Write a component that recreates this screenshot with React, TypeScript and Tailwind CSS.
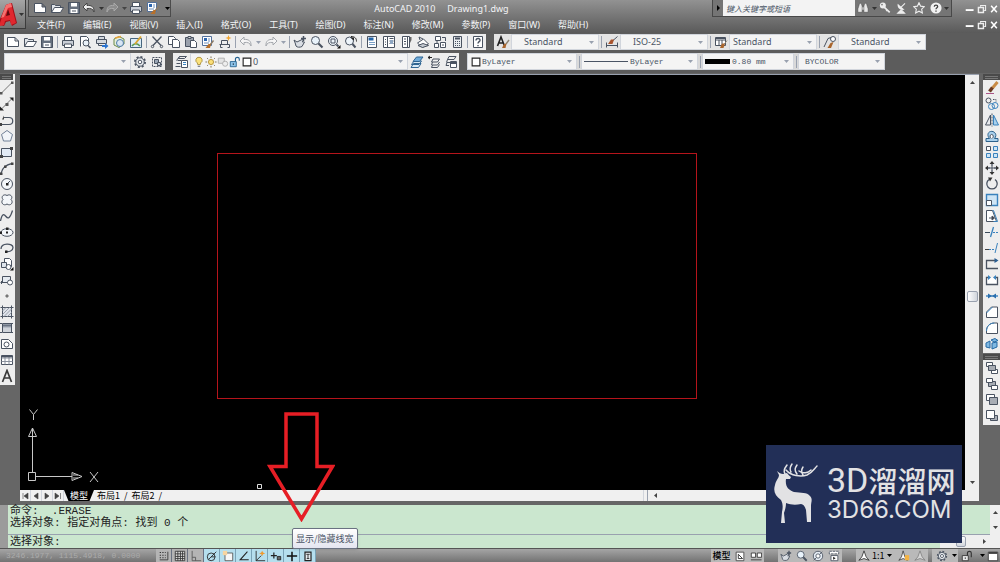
import type { ReactNode } from 'react'

type IconName = keyof typeof icons

const ink = '#4a5361'
const blue = '#3a82bd'

const icons = {
  newFile: <path d="M1.500 2.500h7.500l3.500 3.500v5.500h-11zM9 2.500v3.500h3.500" fill="#fff" />,
  open: <><path d="M1.500 11.500v-8h3l1 1h5v2" fill="#dfe3e8" /><path d="M1.500 11.500l3-5h9l-3 5z" fill="#fff" /></>,
  save: <><path d="M1.500 1.500h11v11h-11z" fill="#66707e" /><path d="M4 2h6v3.500H4zM3.500 8h7v4h-7z" fill="#fff" stroke="none" /><path d="M5 10h4" /></>,
  undo: <path d="M5 2L1 6l4 4V7.500c4-.5 6 .5 7 3.500.500-5-2.500-7-7-6.500z" />,
  redo: <path d="M9 2l4 4-4 4V7.500c-4-.5-6 .5-7 3.500C1.500 6 4.500 4 9 4.500z" />,
  print: <><path d="M3.500 5V1.500h7V5" fill="#fff" /><path d="M1.500 5.500h11v5h-11z" fill="#c9ced6" /><path d="M3.500 9h7v3.500h-7z" fill="#fff" /></>,
  preview: <><path d="M2.500 11.500v-10h6l2 2v3" fill="#fff" /><circle cx="8" cy="8" r="3" fill="#e8f0f8" /><path d="M10 10.500l2.500 2.500" strokeWidth="1.600" /></>,
  publish: <><path d="M3.500 4V1.500h6V4M1.500 4.500h10v4h-10z" fill="#d5d9df" /><path d="M3.500 8v2.500h4" /><path d="M7 10h3V8l3.500 3-3.500 3v-2H7z" fill="#2b74d0" stroke="none" /></>,
  dwf: <><path d="M2 4l5-2.500L12 4v5l-5 3.500L2 10z" fill="#e6efda" stroke="#6b8a4a" /><circle cx="8" cy="8" r="3.500" fill="#d9e6f4" stroke="#4f7ca8" /><path d="M3 3l6-1.500" stroke="#e6a23a" strokeWidth="1.600" /></>,
  markup: <><path d="M1.500 3.500h11v9h-11z" fill="#dcecf8" stroke="#47657f" /><path d="M3 11c2-3 5-3 8 0" stroke="#5b9a52" strokeWidth="1.600" /><path d="M6 9l6-7.500" stroke="#d9a531" strokeWidth="2" /></>,
  cut: <><path d="M2.500 1.500l8.500 9M11.500 1.500L3 10.500" strokeWidth="1.300" /><circle cx="2.500" cy="11.500" r="1.200" /><circle cx="11.500" cy="11.500" r="1.200" /></>,
  copy: <><path d="M1.500 1.500h5l2 2v6h-7z" fill="#fff" /><path d="M5.500 4.500h5l2 2v6h-7z" fill="#fff" /></>,
  paste: <><path d="M1.500 2.500h8v9h-8z" fill="#9aa1ac" /><path d="M4 1.500h3v2H4z" fill="#ddd" /><path d="M6.500 5.500h4l2 2v5h-6z" fill="#fff" /></>,
  match: <><path d="M1.500 1.500h9v9h-9z" fill="#fff" stroke="#52709b" /><path d="M3 3h3v3H3z" fill="#2c66b0" stroke="none" /><path d="M7 4h2M7 6h2M3 8h5" stroke="#6f8fba" /><path d="M12.500 5.500L9 10" stroke="#8b7b68" strokeWidth="1.500" /><path d="M10 9l-1 4H4.500l3-4z" fill="#b6702b" stroke="none" /></>,
  block: <><path d="M1.500 9.500h10M3.500 9V5.500h6V9M2.500 9.500v3h2M9.500 12.500h2v-3" /><path d="M10.500 0l.8 2.200L13.500 3l-2.200.8-.8 2.200-.8-2.200L7.500 3l2.200-.8z" fill="#f2a52c" stroke="none" /></>,
  pan: <><path d="M1 5l3 2 5-2.500c2-.5 1.500 1.500 0 2.200L11.500 7 9 11.500c-2 1-5 1-6-.5C2.500 9 2 7 1 5z" fill="#d9dde3" /><path d="M10.500 1v5M8 3.500h5" strokeWidth="1.500" /></>,
  zoom: <><circle cx="5.500" cy="5.500" r="4" fill="#e9f3fb" /><path d="M8.500 8.500l4 4" strokeWidth="2.200" /></>,
  zoomWindow: <><circle cx="6" cy="6" r="4.500" fill="#eef5fb" /><path d="M4 4h4v4H4z" /><path d="M9.500 9.500l2 2" strokeWidth="2" /><path d="M13.500 10v3.500H10z" fill="#111" stroke="none" /></>,
  zoomPrev: <><circle cx="5.500" cy="6" r="4" fill="#eef5fb" /><path d="M8.500 9l3 3.500" strokeWidth="2" /><path d="M7 1.500c4 0 5.500 2 5.500 5" stroke="#222" /><path d="M6 2.500h4v3z" fill="#222" stroke="none" /></>,
  props: <><path d="M2.500 1.500h9v11h-9z" fill="#fff" /><path d="M3.500 2.500h5v3h-5z" fill="#2465a8" stroke="none" /><path d="M4 7.500h6M4 9.500h6" stroke="#7b9fc5" /></>,
  dcenter: <><path d="M1.500 1.500h11v11h-11z" fill="#fff" /><path d="M5.500 2v10M7.500 3.500h4M7.500 6h4M7.500 8.500h4M3 4.500h1M3 7h1M3 9.500h1" /><path d="M8 5h3v4H8z" fill="#8ea6c2" stroke="none" /></>,
  palettes: <><path d="M3.500 1.500h7v11h-7z" fill="#fff" /><path d="M8.500 2v10M5 4h2M5 6.500h2M5 9h2" /><path d="M11 2h1.500v3L11 8z" fill="#666" stroke="none" /></>,
  sheets: <><path d="M1.500 8l6-4 5 5-6 3.500z" fill="#fff" /><path d="M2 10.500l5-2 5.500 2-6 2z" fill="#c4c9d0" /><path d="M4 5L3 2l4 2" /></>,
  markupSet: <><path d="M2.500 1.500h5v4h-5zM7.500 7.500h5v5h-5zM1.500 8.500h4v4h-4z" fill="#fff" /><path d="M9 2.500h3.500V6M4 6v2.500M9 10h2" /></>,
  calc: <><path d="M3.500 1.500h8v11h-8z" fill="#e9ecef" /><path d="M5 3.500h5" strokeWidth="2" /><path d="M5 6.500h5M5 8.500h5M5 10.500h5" strokeDasharray="1 1" /></>,
  help: <><path d="M2.500 1.500h9v11h-9z" fill="#fff" /><path d="M5 5.500c0-3 4.500-2.500 4 0-.3 1.200-2 1.200-2 3M7 10v1.200" strokeWidth="1.400" /></>,
  textStyle: <><path d="M1.500 11L5 2l3.500 9M3 8h4" stroke="#222" strokeWidth="1.600" /><path d="M13 5l-3 4" stroke="#8d8371" strokeWidth="1.400" /><path d="M10.500 8.500L9.500 13H6l2-4z" fill="#a9652c" stroke="none" /></>,
  dimStyle: <><path d="M1.500 7.500v5M12.500 7.500v5M2 10.500h10M12.500 1.500L8 5.500" /><path d="M9 4.500L7.500 9H3l3-4.500z" fill="#a9542c" stroke="none" /></>,
  tableStyle: <><path d="M1.500 2.500h10v8h-10z" fill="#fff" /><path d="M1.500 5h10M5 5v5.500M8 5v5.500M2 3.500h9" /><path d="M13 5.500l-3 4" stroke="#8d8371" /><path d="M11 8.500L9.500 13H6l2-4.500z" fill="#a9652c" stroke="none" /></>,
  leaderStyle: <><path d="M1 12l4-8.500 3-1" /><circle cx="10" cy="4" r="2.500" fill="#fff" /><path d="M10.500 7L8 13H4.500l3-5z" fill="#a9652c" stroke="none" /></>,
  gear: <><circle cx="7" cy="7" r="5" strokeWidth="2" strokeDasharray="2 1.900" /><circle cx="7" cy="7" r="4.200" fill="#eceff2" /><circle cx="7" cy="7" r="1.800" fill="#fff" /></>,
  wsSave: <><path d="M2.500 2.500h9v9h-9z" strokeDasharray="2 1" /><path d="M4.500 4.500h4v4h-4z" fill="#9aa6b5" /><path d="M7.500 7.500h3v3h-3z" fill="#c6ced8" /></>,
  layers: <><path d="M4.500 1.500h7l-2 2h-6zM2.500 5.500h4M1.500 8.500h4M.500 11.500h5M4.500 1.500l-3 4" /><path d="M6.500 5.500h6v7h-6z" fill="#fff" /><path d="M8 7.500h3M8 9.500h3" stroke={blue} /></>,
  bulb: <><path d="M7 1.500a3.500 3.500 0 012 6.500l-.5 2h-3L5 8a3.500 3.500 0 012-6.500z" fill="#fbe27c" stroke="#a58a35" /><path d="M5.500 12h3" /></>,
  sun: <><circle cx="7" cy="7" r="3" fill="#fbe07a" stroke="#b08b2c" /><path d="M7 .5v2M7 11.500v2M.5 7h2M11.500 7h2M2.500 2.500l1.200 1.200M10.300 10.300l1.200 1.200M2.500 11.500l1.200-1.200M10.300 3.700l1.200-1.200" stroke="#6d6244" /></>,
  freeze: <><path d="M1.500 2.500h7v6h-7z" fill="#e4e4e4" stroke="#aaa" /><circle cx="9.500" cy="9" r="3" stroke="#aaa" fill="#eee" /></>,
  unlock: <><path d="M1.500 6.500h7v6h-7z" fill="#8ec4ea" stroke="#24618f" /><path d="M7.500 6.500v-3c0-2.500 4.500-2.500 4.500 0v2" stroke="#24618f" strokeWidth="1.300" /><path d="M5 8.500v2" stroke="#123" /></>,
  lockUi: <><path d="M1.500 6.500h7v6h-7z" fill="#e8e8e8" stroke="#333" /><path d="M7.500 6.500v-3c0-2.500 4.500-2.500 4.500 0v5" stroke="#333" strokeWidth="1.300" /><path d="M5 8.500v2" stroke="#333" /></>,
  swatch: <path d="M2.500 2.500h9v9h-9z" fill="#fff" stroke="#222" strokeWidth="1.300" />,
  makeLayer: <><path d="M1 12.500l2.500-4H11l-2.500 4zM1.500 9.500L4 6h7.500L9 9.500z" fill="#d7e9f6" stroke="#2f6592" /><path d="M3 6.500l3.500-4.500H13L9.500 6.500z" fill="#6fabd9" stroke="#2f6592" /></>,
  layerPrev: <><path d="M4.500 7l1.500-3h6.500l-2 3zM4.500 10l1-3M4.500 12.500l1-2.500M5 10h5.500l2-3M4.500 12.500h6l2-3" /><path d="M1 2.500h4M1 2.500l2-1.500M1 2.500l2 1.500" stroke="#222" /></>,
  layerState: <><path d="M5 1.500h7l-2 3H3.500zM2.500 7.500l1-3M2 10.500l1-3h3M2 10.500h3" /><path d="M6.500 6.500h6v6h-6z" fill="#fff" /><path d="M7 8h5" strokeWidth="2" /></>,
  line: <><path d="M1 12.500L12 1.500" stroke="#777" /><path d="M0 11h2.500v2.500H0zM11 .5h2.500V3H11z" fill="#555" stroke="none" /></>,
  xline: <><path d="M1.500 12l10-10" stroke="#777" /><path d="M0 13.500v-4l4 4zM13.500.5v4l-4-4z" fill="#222" stroke="none" /><path d="M5.500 6h3v3h-3z" fill="#555" stroke="none" /></>,
  pline: <><path d="M0 11.500h9c5 0 5-7 0-7H4" strokeWidth="1.200" /><path d="M4 2.500v4H2zM0 10h2v3H0z" fill="#444" stroke="none" /></>,
  polygon: <path d="M7 1.500l5.500 4-2 6.500h-7l-2-6.500z" fill="#f2f5f9" stroke="#718096" />,
  rect: <><path d="M1.500 3.500h10v8h-10z" fill="#e3ebf5" /><path d="M0 10h3v3H0zM10 2h3v3h-3z" fill="#444" stroke="none" /></>,
  arc: <><path d="M1 12.500C2 7 5 4 12 2.500" strokeWidth="1.300" /><path d="M0 11.500h2.500V14H0zM4 4.500h2.500V7H4zM11 1.500h2.500V4H11z" fill="#444" stroke="none" /></>,
  circle: <><circle cx="7" cy="7" r="5.500" fill="#f4f7fa" /><path d="M7 7l3-3" /><path d="M6 6h2.500v2.500H6z" fill="#222" stroke="none" /></>,
  cloud: <path d="M7 2.500C4 .5.500 3.500 3 6.500c-3 3 .5 7 4 4.500 3.500 2.500 7-1.500 4-4.500 2.500-3-1-6-4-4z" fill="#f4f7fa" />,
  spline: <path d="M.5 12C2 4 4 5 6 7.500s4 2 6.500-6" strokeWidth="1.300" />,
  ellipse: <><ellipse cx="7" cy="7.500" rx="6" ry="3.800" fill="#f4f7fa" /><path d="M6 2.500h2.500V5H6zM0 6.500h2V9H0zM6 6.500h2v2H6z" fill="#222" stroke="none" /></>,
  ellipseArc: <><path d="M1 8C1 1.500 13 2 13 6.500c0 3.500-4 4.500-7 4" strokeWidth="1.300" /><path d="M5 9.500h2.500V12H5z" fill="#222" stroke="none" /></>,
  insert: <><path d="M4.500 1.500h5l2 2v6h-7z" fill="#fff" /><path d="M1.500 5.500h5v5h-5z" fill="#dfe5ec" /><circle cx="8.500" cy="10" r="2.500" fill="#fff" /><path d="M13.500 10v3.500H10z" fill="#111" stroke="none" /></>,
  makeBlock: <><path d="M2.500 3.500h8v6h-8z" fill="#e6ebf1" /><circle cx="10" cy="9.500" r="2.500" fill="#fff" /><path d="M.5 9.500h3M1.500 8v3" /></>,
  point: <path d="M6 6h2v2H6z" fill="#777" stroke="#777" />,
  hatch: <><path d="M2.500 2.500h9v9h-9z" fill="#dfe3ea" /><path d="M2.500 6l3.500-3.500M2.500 9.500l7-7M4 11.500L11.500 4M7.500 11.500l4-4" stroke="#9aa0ab" /><path d="M.5 2.500h13M2.500.5v13M11.500.5v13M.5 11.500h13" strokeDasharray="2 9" /></>,
  gradient: <><path d="M2.500 2.500h9v9h-9z" fill="#b6bcc6" /><path d="M3 8h8M3 10h8" stroke="#e8ebee" /><path d="M3 4.500h8" stroke="#6a7483" strokeWidth="2" /><path d="M0 2.500h13.500M0 11.500h13.500" strokeDasharray="2 9" /></>,
  region: <><path d="M1.500 2.500h7l4 4v5h-11z" fill="#fff" /><circle cx="6.500" cy="7.500" r="2.500" /></>,
  table: <><path d="M1.500 2.500h11v9h-11z" fill="#fff" /><path d="M1.500 5h11M1.500 8.500h11M5 4v7.500M9 4v7.500" stroke="#8a919d" /><path d="M2 3.500h10" strokeWidth="1.600" /></>,
  mtext: <path d="M2.500 13L7 1.500 11.500 13M4 9h6" stroke="#3a3a3a" strokeWidth="1.700" />,
  erase: <><path d="M12.500 1L7.500 7" stroke="#c98b45" strokeWidth="3" /><path d="M7.500 6.500l-3 4" stroke="#6b3b22" strokeWidth="3.400" /><path d="M1 12.500h8" stroke="#a58" /></>,
  copyObj: <><circle cx="3.500" cy="3.500" r="2.500" /><circle cx="6.500" cy="9.500" r="3" stroke={blue} /><circle cx="10" cy="8.500" r="3" stroke={blue} /><path d="M8 2.500h3V5" strokeDasharray="1.500 1" /></>,
  mirror: <><path d="M5.500 2v10h-5z" fill="#e7e9ec" /><path d="M8.500 2v10h5z" fill="#a9d0ec" stroke={blue} /><path d="M7 .5v13" strokeDasharray="2 1" /></>,
  offset: <><path d="M1 12.500h12v-3H9.500c3.500-4-.5-8-4-7s-3 5-1 7H1z" stroke="#2d628c" fill="#a9d0ec" /><path d="M6 9.500c-2-2-.5-4.500 1-4s2 2.500 0 4" fill="#fff" /></>,
  array: <><path d="M1.500 1.500h4v4h-4z" fill="#fff" /><path d="M8.500 1.500h4v4h-4zM1.500 8.500h4v4h-4zM8.500 8.500h4v4h-4z" fill="#cfe5f5" stroke={blue} /></>,
  move: <><path d="M7 2v3M7 9v3M2 7h3M9 7h3" strokeWidth="1.300" /><path d="M7 0l2.500 3h-5zM7 14l2.500-3h-5zM0 7l3-2.500v5zM14 7l-3-2.500v5z" fill="#333" stroke="none" /><path d="M6 6h2v2H6z" /></>,
  rotate: <><path d="M4 2.500a5.200 5.200 0 106 0" strokeWidth="1.300" /><path d="M3 .5h4.500L5 4.500z" fill="#333" stroke="none" /></>,
  scale: <><path d="M1.500 1.500h11v11h-11z" fill="#cfe5f5" stroke={blue} strokeWidth="1.400" /><path d="M1.500 7.500h5v5h-5z" fill="#fff" /></>,
  stretch: <><path d="M1.500 1.500h6l4 11h-10z" fill="#fff" stroke={ink} /><path d="M7.500 1.500h1l4 11h-4" stroke={blue} /><path d="M4 9h4M7 7l2.500 2L7 11z" fill="#222" /></>,
  trim: <><path d="M0 7.500h5" stroke="#3a4a5a" /><path d="M5.500 12l3-10" stroke={blue} strokeWidth="1.300" /><path d="M8 7.500h6" stroke={blue} strokeDasharray="2 1" /></>,
  extend: <><path d="M0 8.500h4" stroke="#444" /><path d="M4 8.500h5" stroke={blue} strokeDasharray="2 1" /><path d="M10 12l2.500-10" stroke={blue} /></>,
  breakPt: <><path d="M12 3.500H1.500v8H13" strokeWidth="1.300" /><path d="M9.500 1l4 2.500-4 2.500z" fill="#2a5f94" stroke="none" /></>,
  breakObj: <><path d="M4 4.500H1.500v7h11v-7H10" strokeWidth="1.300" fill="#fff" /><path d="M3 2l3 2.500L3 7zM11 2L8 4.500 11 7z" fill={blue} stroke="none" /></>,
  join: <><path d="M1 7h12" stroke={blue} strokeWidth="1.400" /><path d="M3 4.500l4 2.500-4 2.500zM11 4.500L7 7l4 2.500z" fill="#2a6fae" stroke="none" /></>,
  chamfer: <><path d="M1.500 12.500V7l5-5h6v10.500z" fill="#fff" /><path d="M1.500 8l6-6" stroke={blue} /></>,
  fillet: <><path d="M1.500 12.500V10c0-5 3.500-8 8-8h3v10.500z" fill="#fff" /><path d="M1.500 10c0-5 3.500-8 8-8" stroke={blue} /></>,
  explode: <><path d="M1 6l4-2v7l-4-1zM6 3l4-1.500 3 2L9 5zM7 6l5-1v5l-5 2z" fill="#7fb8e2" stroke="#2669a3" /></>,
  front: <><path d="M1.500 1.500h6v4h-6zM6.500 8.500h6v4h-6z" fill="#fff" /><path d="M3.500 4.500h7v5h-7z" fill="#a8adb5" /></>,
  back: <><path d="M3.500 4.500h7v5h-7z" fill="#a8adb5" /><path d="M1.500 1.500h6v4h-6zM6.500 8.500h6v4h-6z" fill="#fff" /></>,
  above: <><path d="M1.500 1.500h8v6h-8z" fill="#fff" /><path d="M4.500 4.500h8v7h-8z" fill="#a8adb5" /></>,
  under: <><path d="M5.500 6.500h7v5h-7z" fill="#a8adb5" /><path d="M1.500 1.500h8v8h-8z" fill="#fff" /></>,
  binoculars: <><path d="M2 5l1-3.500h2L6 5v7H1V8zM8 5l1-3.500h2L12 5l1 3v4H8z" fill="#e8e8e8" stroke="#444" strokeWidth="0.600" /><path d="M6 6h2v3H6z" fill="#bbb" stroke="none" /></>,
  key: <><circle cx="4.500" cy="4" r="3.500" fill="#eee" stroke="none" /><path d="M6 6l6.500 6M9.500 9.500l-1 1" stroke="#eee" strokeWidth="2" /><circle cx="3.500" cy="3" r="1" fill="#777" stroke="none" /></>,
  dish: <><path d="M2 2c-1 5 3 8 8 7z" fill="#eee" stroke="none" /><path d="M6 6l4.500-4.500M2 13h8L6 9z" stroke="#eee" fill="#eee" strokeWidth="1.300" /></>,
  star: <path d="M7 .8l1.900 4 4.400.6-3.200 3 .8 4.400L7 10.700l-3.900 2.100.8-4.400-3.200-3 4.400-.6z" fill="#777" stroke="#eee" strokeWidth="1.300" />,
  helpRound: <><circle cx="7" cy="7" r="6.500" fill="#f2f2f2" stroke="none" /><path d="M5 5.500c0-2.500 4-2.500 4 0-.2 1.300-2 1.300-2 3M7 10v1.300" stroke="#444" strokeWidth="1.500" /></>,
  minimize: <path d="M1 8.500h11" stroke="#fff" strokeWidth="2.600" />,
  restore: <><path d="M5 4V2h7v7h-2" stroke="#eee" strokeWidth="1.500" /><path d="M2 5h7v7H2z" stroke="#eee" strokeWidth="2" /></>,
  close: <path d="M3 2.500l8 9M11 2.500l-8 9" stroke="#fff" strokeWidth="2.200" />,
  snap: <><path d="M2 3h7M2 6h7M2 9h7" stroke="#333" strokeDasharray="1.500 1.500" strokeWidth="1.200" /><path d="M11.500 2v9.500H2" stroke="#333" /></>,
  grid: <path d="M1.500 1.500h11v11h-11zM4.500 1.500v11M7.500 1.500v11M10 1.500v11M1.500 4.500h11M1.500 7.500h11M1.500 10h11" stroke="#333" fill="#ddd" />,
  ortho: <path d="M2.500 1v11.500H13M2.500 8.500h4v4" stroke="#555" />,
  polar: <><circle cx="6" cy="8" r="4.500" stroke="#222" /><path d="M3 11l9-9M6 8h5" stroke="#222" /></>,
  osnap: <><path d="M3.500 3.500h9v9h-9z" fill="#f6f6f6" stroke="#555" /><path d="M1 1h5v5H1z" fill="#f7d5a0" stroke="none" /></>,
  otrack: <path d="M11 2L2.500 11.500h10" stroke="#222" strokeWidth="1.200" />,
  ducs: <><path d="M2.500 1v11.500H13M2.500 12.500l6-6" stroke="#222" /><path d="M9.500 1l1 2 2.500 1-2.500 1-1 2-1-2L6 4l2.500-1z" fill="#f29a2c" stroke="none" /></>,
  dyn: <><path d="M1 6.500h7M4.500 3v7" stroke="#222" strokeWidth="1.400" /><path d="M8.500 7.500h4v4h-4z" fill="#666" stroke="#222" /></>,
  lwt: <path d="M1 7h12M7 2v11" stroke="#111" strokeWidth="1.800" />,
  qp: <><path d="M3.500 2.500h7v10h-7z" fill="#e7eef2" stroke="#222" strokeWidth="1.400" /><path d="M5 5h4M7 5v5M5.500 10h3" stroke="#222" /></>,
  layout: <><path d="M2.500 2.500h9v10h-9z" fill="#fff" stroke="#444" /><path d="M5 5v5h5z" fill="#fff" stroke="#222" /></>,
  quickView: <path d="M1.500 3.500h5v5h-5zM8.500 3.500h5v5h-5zM1 11.500h12.500" fill="#fff" stroke="#333" />,
  wheel: <><circle cx="7" cy="7" r="5.500" fill="#e6edf4" /><circle cx="7" cy="7" r="2.500" fill="#fff" /><path d="M9 5l3-3M5 9l-3 3" /></>,
  motion: <><path d="M1.500 1.500h11v3h-11z" fill="#fff" strokeDasharray="3 1" /><path d="M3.500 6.500h8v6h-8z" fill="#fff" /><path d="M6 8v3.500L9 9.700z" fill="#222" stroke="none" /></>,
  anno: <path d="M7 1L4.500 8 1 12l6-2 6 2-3.500-4z" fill="#fff" stroke="#333" />,
  annoSpark: <><path d="M6 1L4 8l-3 4 5-2 5 2-3-4z" fill="#fff" stroke="#444" /><path d="M8 6h5v6H8z" fill="#f4b344" stroke="none" /></>,
  window: <><path d="M1.500 2.500h11v10h-11z" fill="#fff" stroke="#333" /><path d="M2 3.500h10" stroke="#333" strokeWidth="2" /></>,
}

function Icon({ name, small }: { name: IconName; small?: boolean }) {
  return (
    <svg viewBox="0 0 14 14" className={small ? 'size-3 shrink-0' : 'size-3.5 shrink-0'} fill="none" stroke={ink} aria-hidden="true">
      {icons[name]}
    </svg>
  )
}

function ToolButton({ name }: { name: IconName }) {
  return (
    <button type="button" aria-label={name} className="flex h-full w-[17px] shrink-0 items-center justify-center">
      <Icon name={name} />
    </button>
  )
}

function Caret({ className = 'text-gray-500' }: { className?: string }) {
  return (
    <svg viewBox="0 0 5 3" className={`h-[3px] w-[5px] shrink-0 ${className}`} aria-hidden="true">
      <path d="M0 0h5L2.500 3z" fill="currentColor" />
    </svg>
  )
}

function Separator() {
  return (
    <span className="flex h-full w-1 shrink-0 items-center justify-center">
      <span className="h-3 w-px bg-gray-400" />
    </span>
  )
}

function Combo({ label, value, className, font, children }: { label: string; value: string; className: string; font: string; children?: ReactNode }) {
  return (
    <label className={`relative flex h-full shrink-0 items-center border border-gray-300 bg-[#f4f4f4] pr-1 ${className}`}>
      {children}
      <select aria-label={label} className={`min-w-0 flex-1 appearance-none bg-transparent leading-3 text-gray-600 ${font}`}>
        <option>{value}</option>
      </select>
      <Caret className="text-gray-400" />
    </label>
  )
}

const sans = 'font-["Noto_Sans","Noto_Sans_CJK_SC",sans-serif]'
const comboSans = 'font-["Noto_Sans",sans-serif] text-[9px]'
const comboMono = 'font-["Liberation_Mono",monospace] text-[8px]'

const menus = ['文件(F)', '编辑(E)', '视图(V)', '插入(I)', '格式(O)', '工具(T)', '绘图(D)', '标注(N)', '修改(M)', '参数(P)', '窗口(W)', '帮助(H)']

const standardGroups: IconName[][] = [
  ['newFile', 'open', 'save'],
  ['print', 'preview', 'publish', 'dwf', 'markup'],
  ['cut', 'copy', 'paste', 'match', 'block'],
]
const viewGroups: IconName[][] = [
  ['pan', 'zoom', 'zoomWindow', 'zoomPrev'],
  ['props', 'dcenter', 'palettes', 'sheets', 'markupSet', 'calc'],
  ['help'],
]

const drawTools: IconName[] = ['line', 'xline', 'pline', 'polygon', 'rect', 'arc', 'circle', 'cloud', 'spline', 'ellipse', 'ellipseArc', 'insert', 'makeBlock', 'point', 'hatch', 'gradient', 'region', 'table', 'mtext']
const modifyTools: IconName[] = ['erase', 'copyObj', 'mirror', 'offset', 'array', 'move', 'rotate', 'scale', 'stretch', 'trim', 'extend', 'breakPt', 'breakObj', 'join', 'chamfer', 'fillet', 'explode']
const orderTools: IconName[] = ['front', 'back', 'above', 'under']

const toggles: Array<{ name: IconName; on: boolean }> = [
  { name: 'snap', on: false },
  { name: 'grid', on: false },
  { name: 'ortho', on: false },
  { name: 'polar', on: true },
  { name: 'osnap', on: true },
  { name: 'otrack', on: true },
  { name: 'ducs', on: true },
  { name: 'dyn', on: true },
  { name: 'lwt', on: true },
  { name: 'qp', on: true },
]

function WindowButtons() {
  const names: IconName[] = ['minimize', 'restore', 'close']
  return (
    <div className="ml-auto flex shrink-0 items-center pl-3">
      {names.map((name) => (
        <button key={name} type="button" aria-label={name} className="flex w-3 justify-center">
          <svg viewBox="0 0 14 14" className="size-2.5" fill="none">{icons[name]}</svg>
        </button>
      ))}
    </div>
  )
}

function TitleBar() {
  const quick: IconName[] = ['newFile', 'open', 'save']
  const info: IconName[] = ['key', 'dish', 'star', 'helpRound']
  return (
    <header className={`flex h-[33px] shrink-0 bg-linear-to-b from-[#929292] to-[#5a5a5a] ${sans}`}>
      <button type="button" aria-label="AutoCAD" className="flex h-[29px] w-[26px] shrink-0 items-center gap-px border-r border-b border-[#3c3c3c] bg-linear-to-b from-[#a5a5a5] to-[#727272]">
        <svg viewBox="0 0 18 26" className="h-[26px] w-[18px] shrink-0" aria-hidden="true">
          <path d="M0 24V18L6 4l6-2 5 20-5 3-2-5-4 1-2 4z" fill="#a30d16" />
          <path d="M0 22L6 4l5-2 5 20-5 2-1-5-5 1-1 4-4 1z" fill="#e0282f" />
          <path d="M6 15l2-7 2 6z" fill="#5e0a0e" />
          <path d="M6 4l5-2 1 4-4 1-4 9-3 1z" fill="#f4716f" />
        </svg>
        <Caret className="text-[#333]" />
      </button>
      <div className="flex min-w-0 flex-1 flex-col">
        <div className="flex h-[17px]">
          <div className="ml-0.5 flex w-[143px] shrink-0 items-center border border-t-0 border-[#4b4b4b] bg-[#7c7c7c] pl-0.5">
            {quick.map((name) => <ToolButton key={name} name={name} />)}
            <button type="button" aria-label="undo" className="flex w-[23px] items-center gap-[3px] text-gray-100">
              <svg viewBox="0 0 14 14" className="size-3.5 shrink-0" fill="#eee" stroke="#444">{icons.undo}</svg>
              <Caret className="text-[#333]" />
            </button>
            <button type="button" aria-label="redo" className="flex w-[23px] items-center gap-[3px]">
              <svg viewBox="0 0 14 14" className="size-3.5 shrink-0" fill="#8d8d8d" stroke="#aaa">{icons.redo}</svg>
              <Caret className="text-[#444]" />
            </button>
            <ToolButton name="print" />
            <ToolButton name="match" />
            <Caret className="ml-1 text-black" />
          </div>
          <h1 className="flex min-w-0 flex-1 items-center justify-center gap-3 text-[9px] leading-4 text-gray-100">
            <span>AutoCAD 2010</span>
            <span>Drawing1.dwg</span>
          </h1>
          <div className="flex w-[240px] shrink-0 items-center border border-t-0 border-[#484848] bg-[#757575]">
            <span className="flex w-2.5 justify-center">
              <svg viewBox="0 0 3 6" className="h-1.5 w-[3px]"><path d="M0 0l3 3-3 3z" /></svg>
            </span>
            <input aria-label="搜索" placeholder="键入关键字或短语" className="h-full min-w-0 flex-1 bg-[#f3f3f3] px-[3px] text-[8px] italic placeholder:text-gray-600" />
            <button type="button" aria-label="搜索" className="flex w-[21px] items-center gap-[3px] pl-0.5">
              <Icon name="binoculars" small />
              <Caret className="text-[#333]" />
            </button>
            {info.map((name) => (
              <button key={name} type="button" aria-label={name} className="flex w-[17px] items-center justify-center">
                <Icon name={name} small />
              </button>
            ))}
            <Caret className="mr-0.5 text-[#333]" />
          </div>
          <WindowButtons />
        </div>
        <nav className="flex h-4 items-center pl-[11px]">
          <div className="flex gap-[18px] text-[9px] leading-4 whitespace-nowrap text-gray-100">
            {menus.map((menu) => <button key={menu} type="button">{menu}</button>)}
          </div>
          <WindowButtons />
        </nav>
      </div>
    </header>
  )
}

function StandardBar() {
  const styles: Array<{ icon: IconName; label: string; value: string; pad: string }> = [
    { icon: 'textStyle', label: '文字样式', value: 'Standard', pad: 'pl-3' },
    { icon: 'dimStyle', label: '标注样式', value: 'ISO-25', pad: 'pl-3' },
    { icon: 'tableStyle', label: '表格样式', value: 'Standard', pad: 'pl-[3px]' },
    { icon: 'leaderStyle', label: '多重引线样式', value: 'Standard', pad: 'pl-3' },
  ]
  return (
    <div className="flex h-4 gap-2 pl-1">
      <div className="flex shrink-0 items-center bg-[#ededed]">
        {standardGroups.map((group) => (
          <div key={group[0]} className="flex h-full">
            {group.map((name) => <ToolButton key={name} name={name} />)}
            <Separator />
          </div>
        ))}
        {(['undo', 'redo'] as const).map((name) => (
          <button key={name} type="button" aria-label={name} className="flex w-[25px] items-center gap-[3px] pl-0.5">
            <svg viewBox="0 0 14 14" className="size-3.5 shrink-0" fill="#f6f6f6" stroke="#a4a8ad">{icons[name]}</svg>
            <Caret className="text-gray-400" />
          </button>
        ))}
        {viewGroups.map((group) => (
          <div key={group[0]} className="flex h-full">
            <Separator />
            {group.map((name) => <ToolButton key={name} name={name} />)}
          </div>
        ))}
      </div>
      <div className="flex shrink-0 bg-[#e4e4e4]">
        {styles.map((style, i) => (
          <div key={style.icon} className="flex h-full">
            {i > 0 && <Separator />}
            <ToolButton name={style.icon} />
            <Combo label={style.label} value={style.value} font={comboSans} className={`w-[88px] ${style.pad}`} />
          </div>
        ))}
      </div>
    </div>
  )
}

function LayerBar() {
  const layerIcons: IconName[] = ['bulb', 'sun', 'freeze', 'unlock', 'swatch']
  return (
    <div className="flex h-[17px] gap-2 pl-1">
      <div className="flex shrink-0 bg-[#ededed]">
        <Combo label="工作空间" value="" font={comboSans} className="w-[127px]" />
        <ToolButton name="gear" />
        <ToolButton name="wsSave" />
      </div>
      <div className="flex shrink-0 bg-[#ededed]">
        <ToolButton name="layers" />
        <Combo label="图层" value="0" font={comboSans} className="w-[218px]">
          <span className="flex w-[62px] shrink-0 pl-0.5">
            {layerIcons.map((name) => <Icon key={name} name={name} small />)}
          </span>
        </Combo>
        <ToolButton name="makeLayer" />
        <ToolButton name="layerPrev" />
        <ToolButton name="layerState" />
      </div>
      <div className="flex shrink-0 bg-[#d9d9d9]">
        <Combo label="颜色" value="ByLayer" font={comboMono} className="w-[110px] pl-0.5">
          <Icon name="swatch" small />
        </Combo>
        <Separator />
        <Combo label="线型" value="ByLayer" font={comboMono} className="w-[117px] gap-0.5 pl-0.5">
          <span className="h-px w-11 shrink-0 bg-gray-600" />
        </Combo>
        <Separator />
        <Combo label="线宽" value="0.80 mm" font={comboMono} className="w-[92px] gap-0.5 pl-0.5">
          <span className="h-[5px] w-[25px] shrink-0 bg-black" />
        </Combo>
        <Separator />
        <Combo label="打印样式" value="BYCOLOR" font={comboMono} className="w-[87px] pl-1.5" />
      </div>
    </div>
  )
}

function ToolColumn({ label, tools, className }: { label: string; tools: IconName[]; className: string }) {
  return (
    <div role="toolbar" aria-label={label} className={`flex flex-col items-center bg-[#eeeeee] pb-px ${className}`}>
      <div className="flex h-1.5 w-full flex-col justify-center gap-px bg-[#4a4a4a] px-0.5">
        <span className="h-px bg-[#777]" />
        <span className="h-px bg-[#777]" />
      </div>
      {tools.map((name) => (
        <button key={name} type="button" aria-label={name} className="flex h-4 w-full items-center justify-center">
          <Icon name={name} />
        </button>
      ))}
    </div>
  )
}

function Drawing() {
  return (
    <svg className="block min-h-0 min-w-0 flex-1 bg-black" fill="none" role="img" aria-label="Drawing1.dwg">
      <rect x="197.5" y="78.5" width="479" height="245" stroke="#b5141b" />
      <g stroke="#c8c8c8">
        <path d="M8.500 397.500h7v8h-7zM12.500 397V353M16 401.500h36" />
        <path d="M12.500 353l-4 8.500h8zM62 401.500l-10-4v8zM12.500 355v6M53 400h5M53 403h5" />
        <path d="M9.500 334.500l4 5 4-5M13.500 339.500v5.500M70 397l8 10M78 397l-8 10" />
      </g>
      <path d="M237.500 409.500h4v4h-4z" stroke="#ddd" />
    </svg>
  )
}

function SheetTabs() {
  const arrows = ['M2 1v6M7 1L3 4l4 3z', 'M6 1L2 4l4 3z', 'M2 1l4 3-4 3z', 'M1 1l4 3-4 3zM6.500 1v6']
  return (
    <div className="flex h-[11px] shrink-0 items-center bg-[#f0f0f0] font-['Noto_Sans_CJK_SC',sans-serif] text-[9px] leading-[11px]">
      {arrows.map((d) => (
        <button key={d} type="button" aria-label="布局" className="flex h-full w-[11px] shrink-0 items-center justify-center border-r border-gray-300">
          <svg viewBox="0 0 8 8" className="size-2" fill="#444" stroke="#444"><path d={d} strokeWidth="0.600" /></svg>
        </button>
      ))}
      <button type="button" className="h-full w-[30px] bg-black text-white [clip-path:polygon(0_0,100%_0,85%_100%,15%_100%)]">模型</button>
      <button type="button" className="pl-[3px]">布局1</button>
      <span className="px-1">/</span>
      <button type="button">布局2</button>
      <span className="px-1">/</span>
      <div className="ml-auto flex h-full w-[336px] items-center gap-1.5 border-l border-gray-300">
        <span className="h-full w-1 border-r border-gray-400" />
        <svg viewBox="0 0 3 5" className="h-[5px] w-[3px]"><path d="M3 0v5L0 2.500z" fill="#444" /></svg>
      </div>
    </div>
  )
}

function Logo() {
  return (
    <div className="absolute right-[38px] bottom-[19px] flex h-[98px] w-[196px] items-center bg-[#222f57] pl-1.5 text-[#e2e2e4]">
      <svg viewBox="0 0 50 64" className="h-16 w-[50px] shrink-0" aria-hidden="true">
        <path d="M5 9c2 2 4 3 6 3l4-1c1 1 2 3 4 4l-1 2h-4c-1 7 2 11 8 13 7 1 13 0 16 4 3 3 1 6 1 10l0 16h-4l-1-12c-1-4-3-6-5-6-5 1-10 1-15-1 0 4-1 7-2 10l1 10H9l1-11c1-5 1-8-1-12-6-4-8-9-6-15 1-5 4-7 4-10z" fill="#e2e2e4" />
        <path d="M13 12c-2-4 0-6 2-9M14 8c5 6 15 7 21 5 5-2 7-6 10-9M19 10c-2-3-1-5 1-8M25 12c-3-4-2-6 0-9M31 13c-2-3-2-5 0-8M27 9c4 3 9 2 12-1" stroke="#e2e2e4" strokeWidth="1.500" fill="none" strokeLinecap="round" />
      </svg>
      <div className="flex flex-col gap-1 pl-[5px] whitespace-nowrap">
        <div className="flex items-center leading-7">
          <span className="font-['Roboto',sans-serif] text-[34px]">3D</span>
          <span className="font-['Noto_Sans_CJK_SC',sans-serif] text-[29px] font-medium">溜溜网</span>
        </div>
        <span className="font-['Inter',sans-serif] text-[24px] leading-6">3D66.COM</span>
      </div>
    </div>
  )
}

function CommandLine() {
  return (
    <section className="relative flex h-[43px] shrink-0 bg-[#cbe7cf] font-['Liberation_Mono','Noto_Sans_CJK_SC',monospace] text-[11px] leading-3 text-[#222]">
      <div className="w-2 shrink-0 bg-[#9b9b9b]" />
      <div className="flex min-w-0 flex-1 flex-col">
        <div className="h-[30px] border-b border-gray-400 pl-0.5 whitespace-pre">
          <p>{'命令:  .ERASE'}</p>
          <p>选择对象: 指定对角点: 找到 0 个</p>
        </div>
        <div className="flex h-[13px] items-center">
          <label htmlFor="command" className="pl-0.5">选择对象:</label>
          <input id="command" className="h-3 min-w-0 flex-1 bg-transparent" />
          <div className="flex h-full w-[50px] items-center justify-between bg-[#efefef] pr-1 pl-4">
            <span className="h-[11px] w-2.5 rounded-xs border border-gray-400 bg-linear-to-b from-white to-gray-300" />
            <svg viewBox="0 0 3 5" className="h-[5px] w-[3px]"><path d="M0 0v5l3-2.500z" fill="#444" /></svg>
          </div>
        </div>
      </div>
      <div className="flex w-2.5 shrink-0 flex-col items-center bg-[#efefef] pt-1.5">
        <Caret className="rotate-180 text-[#444]" />
        <Caret className="mt-3 text-[#444]" />
      </div>
      <div role="tooltip" className="absolute top-[23px] left-[292px] flex h-[21px] items-center rounded-xs border border-gray-500 bg-linear-to-b from-white to-[#e4e5f0] px-[3px] font-['Noto_Sans_CJK_SC',sans-serif] text-[9px] whitespace-nowrap text-gray-600 shadow-sm">
        显示/隐藏线宽
      </div>
    </section>
  )
}

function StatusBar() {
  return (
    <footer className="flex h-[13px] shrink-0 items-center bg-linear-to-b from-[#a5a5a5] to-[#737373] text-[9px] leading-3">
      <span className="w-[156px] shrink-0 pl-1.5 font-['Liberation_Mono',monospace] text-[8px] whitespace-nowrap text-[#ababab]">3246.1977, 1115.4918, 0.0000</span>
      {toggles.map(({ name, on }) => (
        <button
          key={name}
          type="button"
          aria-pressed={on}
          aria-label={name}
          className={`flex h-full w-4 shrink-0 items-center justify-center border-r ${on ? 'border-[#7ba4b8] bg-[#b5dfee]' : 'border-gray-500 bg-[#b4b4b4]'}`}
        >
          <Icon name={name} small />
        </button>
      ))}
      <div className="ml-auto flex h-full items-center font-['Noto_Sans_CJK_SC',sans-serif] text-black">
        <div className="flex h-full items-center bg-[#b9b9b9]">
          <button type="button" className="w-[21px] font-medium">模型</button>
          <button type="button" aria-label="layout" className="flex w-4 justify-center"><Icon name="layout" small /></button>
          <button type="button" aria-label="quick view" className="flex w-4 justify-center"><Icon name="quickView" small /></button>
        </div>
        <div className="ml-3.5 flex h-full items-center bg-[#b9b9b9]">
          {(['pan', 'zoom', 'wheel', 'motion'] as const).map((name) => (
            <button key={name} type="button" aria-label={name} className="flex w-4 justify-center"><Icon name={name} small /></button>
          ))}
        </div>
        <div className="ml-3.5 flex h-full items-center bg-[#b9b9b9]">
          <button type="button" className="flex w-10 items-center gap-0.5 pl-0.5"><Icon name="anno" small />1:1<Caret className="text-black" /></button>
          <button type="button" aria-label="annotation visibility" className="flex w-4 justify-center"><Icon name="annoSpark" small /></button>
          <button type="button" aria-label="annotation scale" className="flex w-4 justify-center opacity-40"><Icon name="anno" small /></button>
        </div>
        <button type="button" aria-label="workspace" className="ml-1 flex h-full w-[26px] items-center gap-1 bg-[#b9b9b9] pl-1"><Icon name="gear" small /><Caret className="text-black" /></button>
        <button type="button" aria-label="lock" className="flex w-[18px] justify-center"><Icon name="lockUi" small /></button>
        <Caret className="mr-0.5 ml-1 text-black" />
        <button type="button" aria-label="clean screen" className="pr-px"><Icon name="window" small /></button>
      </div>
    </footer>
  )
}

export default function App() {
  return (
    <div className="relative flex h-screen flex-col overflow-hidden bg-[#666]">
      <TitleBar />
      <div className="flex shrink-0 flex-col gap-[3px] bg-[#5c5c5c] pt-px pb-[3px]">
        <StandardBar />
        <LayerBar />
      </div>
      <main className="flex min-h-0 flex-1 pt-px pb-1">
        <aside className="w-5 shrink-0">
          <ToolColumn label="绘图" tools={drawTools} className="w-[15px] pr-0.5" />
        </aside>
        <div className="flex min-w-0 flex-1 flex-col border-t border-gray-400">
          <div className="flex min-h-0 flex-1">
            <Drawing />
            <div className="flex w-3.5 shrink-0 flex-col items-center justify-between bg-[#efefef] py-1.5">
              <Caret className="rotate-180 text-[#444]" />
              <span className="mt-7 h-[11px] w-[11px] rounded-xs border border-gray-400 bg-linear-to-r from-white to-gray-300" />
              <Caret className="text-[#444]" />
            </div>
          </div>
          <SheetTabs />
        </div>
        <aside className="flex w-[21px] shrink-0 flex-col gap-px pl-1">
          <ToolColumn label="修改" tools={modifyTools} className="w-full" />
          <ToolColumn label="绘图次序" tools={orderTools} className="w-full" />
        </aside>
      </main>
      <CommandLine />
      <div className="h-px shrink-0 bg-[#555]" />
      <StatusBar />
      <Logo />
      <svg viewBox="0 0 68 112" className="pointer-events-none absolute top-[410px] left-[267px] h-28 w-[68px]" fill="none" aria-hidden="true">
        <path d="M19 4h31v52.500h15.500L34.500 109 3 56.500h16z" stroke="#e61e25" strokeWidth="3.500" />
      </svg>
    </div>
  )
}
